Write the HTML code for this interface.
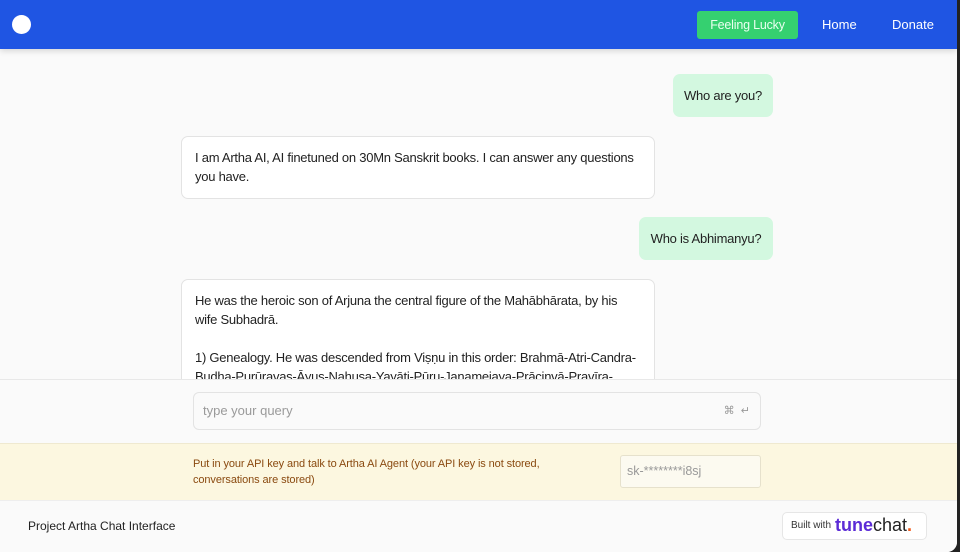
<!DOCTYPE html>
<html><head><meta charset="utf-8"><style>
*{box-sizing:border-box;margin:0;padding:0}
body{width:960px;height:552px;overflow:hidden;background:#222;font-family:"Liberation Sans",sans-serif}
.app{position:absolute;left:0;top:0;width:957px;height:552px;background:#fafafa;border-radius:0 0 10px 0;overflow:hidden}
.hdr{position:absolute;left:0;top:0;width:957px;height:49px;background:#1f55e3;box-shadow:0 2px 6px rgba(0,0,0,.15);z-index:2}
.logo{position:absolute;left:12px;top:15px;width:19px;height:19px;border-radius:50%;background:#fff}
.lucky{position:absolute;left:697px;top:11px;width:101px;height:28px;background:#35d070;border-radius:3px;color:#eafff0;font-size:12.5px;line-height:28px;text-align:center;letter-spacing:-.2px}
.nav{position:absolute;top:17px;color:#fff;font-size:13px}
.bub{position:absolute;font-size:13px;color:#222;line-height:19px;border-radius:7px;letter-spacing:-.25px}
.u{background:#d3f8e0;height:43px;line-height:43px;text-align:center}
.a{background:#fff;border:1px solid #e3e3e3;left:181px;width:474px;padding:11px 13px}
.inarea{position:absolute;left:0;top:379px;width:957px;height:64px;background:#fafafa;border-top:1px solid #e8e8e8}
.inp{position:absolute;left:193px;top:12px;width:568px;height:38px;border:1px solid #e3e3e3;border-radius:6px;background:#fafafa;font-size:13px;color:#9a9a9a;line-height:36px;padding-left:9px}
.kb{position:absolute;right:10px;top:0;font-size:11px;color:#999}
.warn{position:absolute;left:0;top:443px;width:957px;height:57px;background:#fcf7e0;border-top:1px solid #efe9d0}
.wt{position:absolute;left:193px;top:12px;font-size:11px;line-height:16px;color:#8a4a10;letter-spacing:-.1px}
.key{position:absolute;left:620px;top:11px;width:141px;height:33px;border:1px solid #e6e1cc;background:#fcfaf0;border-radius:3px;font-size:12.5px;color:#999;line-height:31px;padding-left:6px}
.ftr{position:absolute;left:0;top:500px;width:957px;height:52px;background:#fafafa;border-top:1px solid #eee}
.ft{position:absolute;left:28px;top:18px;font-size:12px;color:#222}
.bw{position:absolute;left:782px;top:11px;width:145px;height:28px;border:1px solid #e6e6e6;border-radius:5px;background:#fff}
</style></head><body>
<div class="app">
<div class="hdr"><div class="logo"></div><div class="lucky">Feeling Lucky</div><div class="nav" style="left:822px">Home</div><div class="nav" style="left:892px">Donate</div></div>
<div class="bub u" style="left:673px;width:100px;top:74px">Who are you?</div>
<div class="bub a" style="top:136px;height:63px">I am Artha AI, AI finetuned on 30Mn Sanskrit books. I can answer any questions you have.</div>
<div class="bub u" style="left:639px;width:134px;top:217px">Who is Abhimanyu?</div>
<div class="bub a" style="top:279px;height:130px">He was the heroic son of Arjuna the central figure of the Mahābhārata, by his wife Subhadrā.<br><br>1) Genealogy. He was descended from Viṣṇu in this order: Brahmā-Atri-Candra-Budha-Purūravas-Āyus-Nahusa-Yayāti-Pūru-Janamejaya-Prācinvā-Pravīra-</div>
<div class="inarea"><div class="inp">type your query<span class="kb">⌘ &nbsp;↵</span></div></div>
<div class="warn"><div class="wt">Put in your API key and talk to Artha AI Agent (your API key is not stored,<br>conversations are stored)</div><div class="key">sk-********i8sj</div></div>
<div class="ftr"><div class="ft">Project Artha Chat Interface</div>
<div class="bw"><span style="position:absolute;left:8px;top:7px;font-size:10px;color:#333">Built with</span><span style="position:absolute;left:52px;top:2px;font-size:18px;font-weight:bold;color:#5b2bd6">tune<span style="color:#222;font-weight:normal">chat</span><span style="color:#f05a1a">.</span></span></div></div>
</div>
</body></html>
